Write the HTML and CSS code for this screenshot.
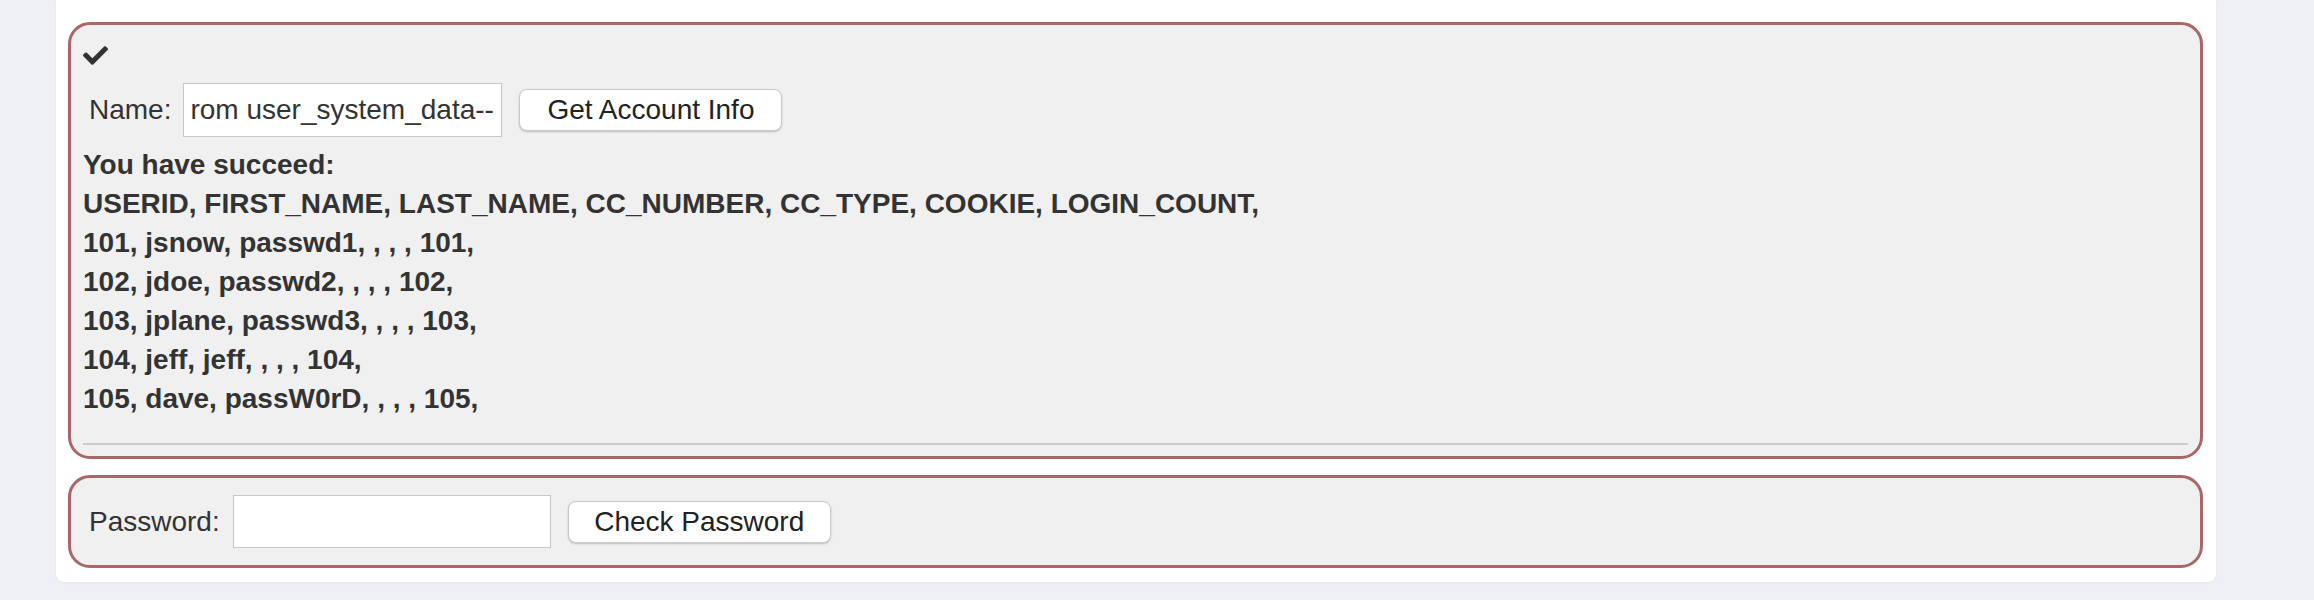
FILE: index.html
```html
<!DOCTYPE html>
<html lang="en">
<head>
<meta charset="utf-8">
<title>Attack</title>
<link rel="stylesheet" href="styles.css">
</head>
<body>
<div class="panel">
  <div class="attack-container result-box">
    <div class="status">
      <svg class="check" viewBox="0 65 512 382" width="25" height="19" aria-hidden="true"><path fill="#333" d="M173.898 439.404l-166.4-166.4c-9.997-9.997-9.997-26.206 0-36.204l36.203-36.204c9.997-9.998 26.207-9.998 36.204 0L192 312.69 432.095 72.596c9.997-9.997 26.207-9.997 36.204 0l36.203 36.204c9.997 9.997 9.997 26.206 0 36.204l-294.4 294.401c-9.998 9.997-26.207 9.997-36.204-.001z"/></svg>
    </div>
    <form class="attack-form">
      <label class="field-label">Name:</label>
      <input class="field-input" type="text" value="rom user_system_data--">
      <button class="btn" type="button">Get Account Info</button>
    </form>
    <div class="output">
      <p>You have succeed:</p>
      <p>USERID, FIRST_NAME, LAST_NAME, CC_NUMBER, CC_TYPE, COOKIE, LOGIN_COUNT, </p>
      <p>101, jsnow, passwd1, , , , 101, </p>
      <p>102, jdoe, passwd2, , , , 102, </p>
      <p>103, jplane, passwd3, , , , 103, </p>
      <p>104, jeff, jeff, , , , 104, </p>
      <p>105, dave, passW0rD, , , , 105, </p>
    </div>
    <hr class="divider">
  </div>
  <div class="attack-container password-box">
    <form class="attack-form">
      <label class="field-label pw-label">Password:</label>
      <input class="field-input pw-input" type="password">
      <button class="btn" type="button">Check Password</button>
    </form>
  </div>
</div>
</body>
</html>
```

FILE: styles.css
```css
* { box-sizing: border-box; }

html, body {
  margin: 0;
  padding: 0;
  height: 600px;
  background: #eff0f5;
  font-family: "Liberation Sans", Arial, Helvetica, sans-serif;
  color: #333;
}

.panel {
  margin-left: 56px;
  width: 2160px;
  background: #fff;
  border-radius: 0 0 8px 8px;
  box-shadow: 0 1px 3px rgba(0, 0, 0, 0.05);
  padding: 22px 13px 14px 12px;
  display: flex;
  flex-direction: column;
  gap: 16px;
}

.attack-container {
  background: #f0f0f0;
  border: 3px solid #ab6767;
  border-radius: 22px;
}

.result-box {
  padding: 10px 12px 11px 12px;
}

.password-box {
  padding: 17px 12px;
}

.status {
  height: 40px;
  display: flex;
  align-items: center;
}

.check { display: block; }

.attack-form {
  display: flex;
  align-items: center;
  padding-left: 6px;
  margin: 0;
}

.result-box .attack-form { margin-top: 8px; }

.field-label {
  font-size: 28px;
  margin-right: 12px;
}

.pw-label { margin-right: 13px; }

.field-input {
  width: 319px;
  height: 54px;
  border: 1px solid #c6c6c6;
  background: #fff;
  padding: 0 6px;
  font-family: inherit;
  font-size: 28px;
  color: #333;
  outline: none;
}

.pw-input {
  width: 318px;
  height: 53px;
}

.btn {
  margin-left: 17px;
  width: 263px;
  height: 42px;
  background: #fff;
  border: 1px solid #c9c9c9;
  border-radius: 8px;
  box-shadow: 0 1px 2px rgba(0, 0, 0, 0.22);
  font-family: inherit;
  font-size: 28px;
  color: #222;
  padding: 0;
}

.output {
  margin-top: 8px;
  font-size: 28px;
  font-weight: bold;
  line-height: 39px;
  color: #333;
}

.output p { margin: 0; }

.divider {
  margin: 25px 0 0 0;
  border: 0;
  height: 2px;
  background: #cccccc;
}
```
